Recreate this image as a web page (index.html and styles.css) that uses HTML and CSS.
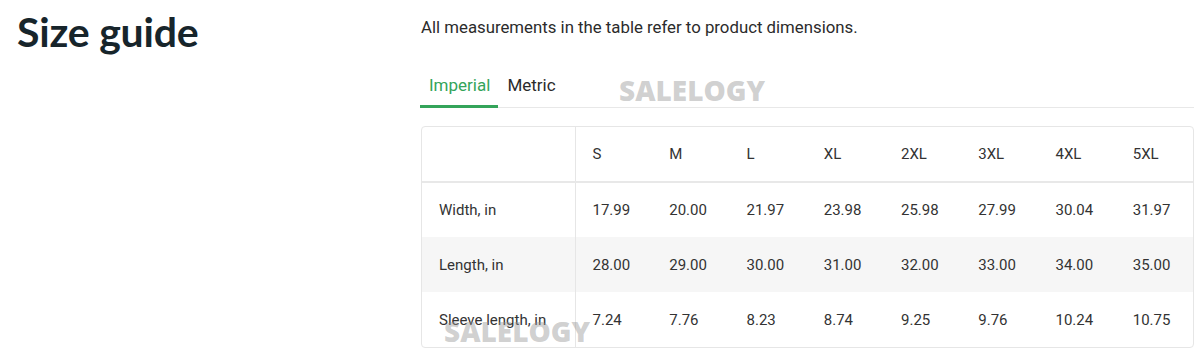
FILE: index.html
```html
<!DOCTYPE html>
<html lang="en">
<head>
<meta charset="utf-8">
<title>Size guide</title>
<link rel="stylesheet" href="styles.css">
</head>
<body>
<div class="page">
  <div class="side">
    <h1 class="title">Size guide</h1>
  </div>
  <div class="main">
    <p class="desc">All measurements in the table refer to product dimensions.</p>
    <div class="tabs">
      <span class="tab active">Imperial</span>
      <span class="tab">Metric</span>
      <span class="mark mark-top">SALELOGY</span>
    </div>
    <div class="table-wrap">
      <table class="sizes">
        <thead>
          <tr>
            <th class="label"></th>
            <th>S</th><th>M</th><th>L</th><th>XL</th><th>2XL</th><th>3XL</th><th>4XL</th><th>5XL</th>
          </tr>
        </thead>
        <tbody>
          <tr>
            <td class="label">Width, in</td>
            <td>17.99</td><td>20.00</td><td>21.97</td><td>23.98</td><td>25.98</td><td>27.99</td><td>30.04</td><td>31.97</td>
          </tr>
          <tr class="alt">
            <td class="label">Length, in</td>
            <td>28.00</td><td>29.00</td><td>30.00</td><td>31.00</td><td>32.00</td><td>33.00</td><td>34.00</td><td>35.00</td>
          </tr>
          <tr>
            <td class="label">Sleeve length, in</td>
            <td>7.24</td><td>7.76</td><td>8.23</td><td>8.74</td><td>9.25</td><td>9.76</td><td>10.24</td><td>10.75</td>
          </tr>
        </tbody>
      </table>
      <span class="mark mark-bottom">SALELOGY</span>
    </div>
  </div>
</div>
</body>
</html>
```

FILE: styles.css
```css
* { box-sizing: border-box; }
html, body { margin: 0; padding: 0; background: #fff; }
body { font-family: Roboto, "Liberation Sans", Arial, sans-serif; color: #333; }

.page {
  display: flex;
  width: 1200px;
  height: 360px;
  overflow: hidden;
}

.side {
  width: 421px;
  flex: none;
  padding-left: 17px;
}

.title {
  margin: 8px 0 0;
  font-family: Lato, "Open Sans", sans-serif;
  font-weight: 700;
  font-size: 41px;
  line-height: 48px;
  color: #17252b;
  letter-spacing: -0.2px;
}

.main {
  width: 773px;
  flex: none;
}

.desc {
  margin: 16px 0 0;
  font-size: 16.8px;
  line-height: 22px;
  color: #2b2b2b;
}

.tabs {
  position: relative;
  display: flex;
  margin-top: 31px;
  border-bottom: 1px solid #e8e8e8;
  height: 39px;
}

.tab {
  padding: 0 8px 0 9px;
  font-size: 17px;
  line-height: 32px;
  color: #2b2b2b;
  height: 39px;
}

.tab.active {
  color: #34a45a;
  border-bottom: 3px solid #34a45a;
  margin-left: -1px;
  padding-right: 8px;
}

.mark {
  position: absolute;
  font-family: "Open Sans", "Liberation Sans", sans-serif;
  font-weight: 800;
  font-size: 28px;
  line-height: 1;
  letter-spacing: 0;
  color: rgba(150, 150, 150, 0.45);
  pointer-events: none;
  white-space: nowrap;
}

.mark-top { left: 198px; top: 7px; }
.mark-bottom { left: 22px; top: 190px; }

.table-wrap {
  position: relative;
  margin-top: 18px;
  border: 1px solid #e6e6e6;
  border-radius: 4px;
  overflow: hidden;
}

.sizes {
  width: 100%;
  border-collapse: collapse;
  table-layout: fixed;
  font-size: 15px;
  color: #333;
}

.sizes th,
.sizes td {
  text-align: left;
  font-weight: 400;
  padding: 0 0 0 17px;
}

.sizes th { height: 55px; border-bottom: 2px solid #e8e8e8; }
.sizes td { height: 55px; }

.sizes .label {
  width: 153px;
  padding-left: 17px;
  border-right: 1px solid #e6e6e6;
}

.sizes tr.alt td { background: #f6f6f6; }
```
